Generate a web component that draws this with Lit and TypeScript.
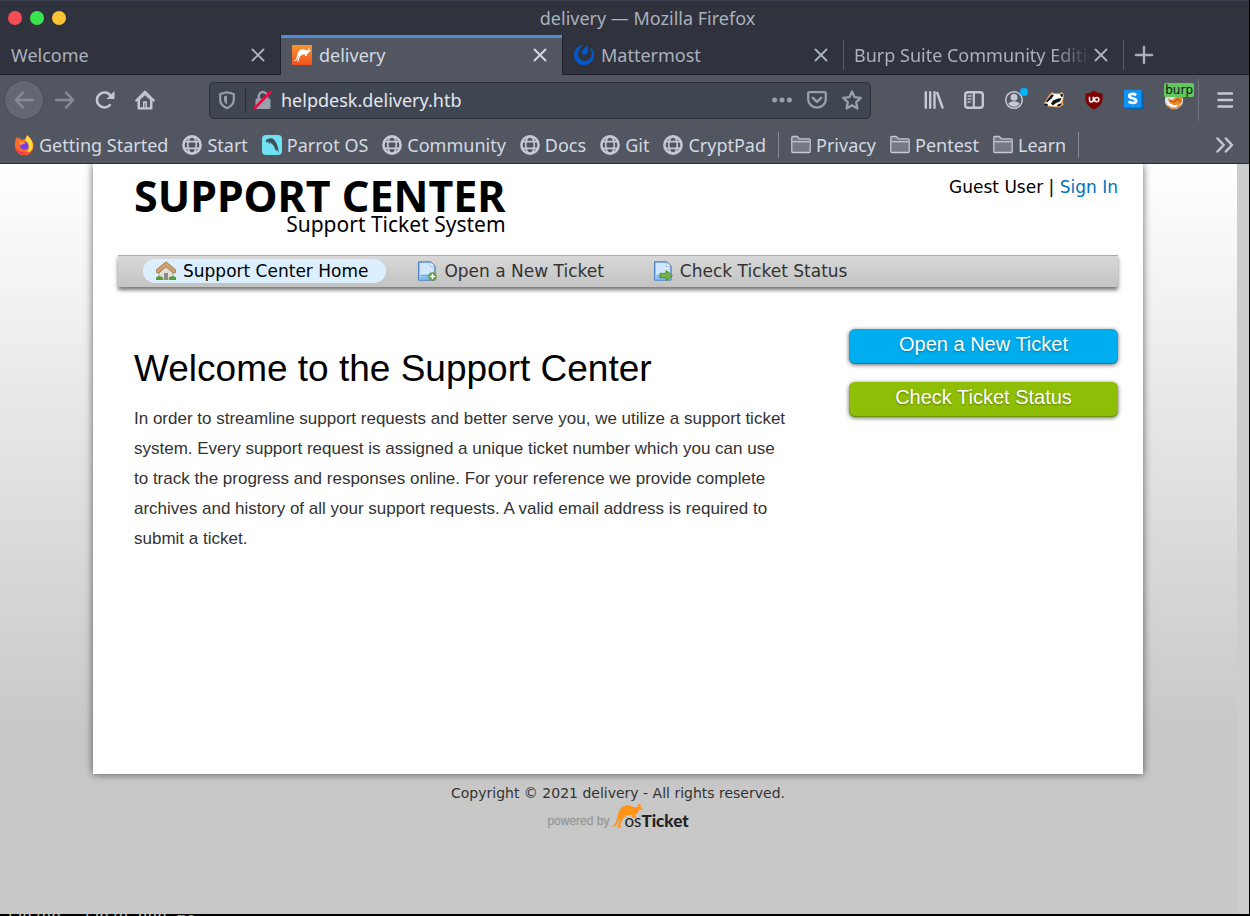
import { LitElement, html, css, svg, nothing, TemplateResult } from "lit";
import { customElement } from "lit/decorators.js";
import { classMap } from "lit/directives/class-map.js";

const icon = (body: unknown, size = 20, box = 20) =>
  html`<svg width=${size} height=${size} viewBox="0 0 ${box} ${box}" aria-hidden="true">${body}</svg>`;

const kangaroo = svg`<path d="M2 71C12 70 17 64 20 52C23 38 25 26 31 18C38 8 52 4 64 9C70 12 76 14 82 12L85 8L83 1L89 5L93 1L92 9L99 18C96 22 92 19 88 21C86 26 84 30 80 34L74 38L80 41L72 46L66 42L66 35C60 38 56 35 51 38C47 42 40 43 38 50L31 66L34 74L22 75L28 56L32 42C25 52 24 76 2 71Z"/>`;

const icons: Record<string, TemplateResult> = {
  close: icon(svg`<path d="M4.500 4.500l11 11M15.500 4.500l-11 11" fill="none" stroke="currentColor" stroke-width="1.900" stroke-linecap="round"/>`),
  plus: icon(svg`<path d="M10 2v16M2 10h16" fill="none" stroke="currentColor" stroke-width="2.400" stroke-linecap="round"/>`),
  back: icon(svg`<path d="M9 2.500L1.800 10 9 17.500M2 10h17" fill="none" stroke="currentColor" stroke-width="2.500" stroke-linecap="round" stroke-linejoin="round"/>`),
  forward: icon(svg`<path d="M11 2.500l7.200 7.500-7.200 7.500M18 10H1" fill="none" stroke="currentColor" stroke-width="2.500" stroke-linecap="round" stroke-linejoin="round"/>`),
  reload: icon(svg`<path d="M14.800 15.200A7.500 7.500 0 1 1 15.800 6" fill="none" stroke="currentColor" stroke-width="2.600" stroke-linecap="round"/><path d="M19.500 1v8h-8Z" fill="currentColor"/>`),
  home: icon(svg`<path d="M1.300 10.500L10 1.800l8.700 8.700" fill="none" stroke="currentColor" stroke-width="2.400" stroke-linecap="round" stroke-linejoin="round"/><path fill-rule="evenodd" d="M2.500 10.500L10 3.500l7.500 7V18.500Q17.500 19.500 16.500 19.500H3.500Q2.500 19.500 2.500 18.500ZM5 9.800V17.300H8V12.200Q8 11.200 9 11.200H11Q12 11.200 12 12.200V17.300H15V9.800L10 5.200Z" fill="currentColor"/><path d="M10 13v4.500" stroke="#525661" stroke-width="1"/>`),
  shield: icon(svg`<path d="M10 2.200L16.800 4V9.500C16.800 13.500 14 16.500 10 18.200 6 16.500 3.200 13.500 3.200 9.500V4Z" fill="none" stroke="currentColor" stroke-width="2.200" stroke-linejoin="round"/><path d="M10 5.500L7 6.300V9.500C7 11.800 8.200 13.400 10 14.600Z" fill="currentColor"/>`),
  lock: icon(svg`<path d="M5.800 9V6.200a4 4 0 0 1 8.200 0V9" fill="none" stroke="currentColor" stroke-width="2.500"/><rect x="2.500" y="8.500" width="15" height="10.500" rx="1.500" fill="currentColor"/><path d="M1.800 18L17.500 2" stroke="#ff0039" stroke-width="2.500" stroke-linecap="round"/>`),
  dots: icon(svg`<circle cx="2.600" cy="10" r="2.500"/><circle cx="10" cy="10" r="2.500"/><circle cx="17.400" cy="10" r="2.500"/>`),
  pocket: icon(svg`<path d="M2.700 2.200H17.300Q18.800 2.200 18.800 3.700V9.300A8.800 8.300 0 0 1 1.200 9.300V3.700Q1.200 2.200 2.700 2.200Z" fill="none" stroke="currentColor" stroke-width="2.300"/><path d="M5.800 7.800L10 11.800l4.200-4" fill="none" stroke="currentColor" stroke-width="2.500" stroke-linecap="round" stroke-linejoin="round"/>`),
  star: icon(svg`<path d="M10 1.500L12.500 7.100 18.800 7.900 14.200 12.100 15.400 18.500 10 15.300 4.600 18.500 5.800 12.100 1.200 7.900 7.500 7.100Z" fill="none" stroke="currentColor" stroke-width="2.300" stroke-linejoin="round"/>`),
  library: icon(svg`<path d="M1.800 2.300v15.400M6.200 2.300v15.400M10.500 2.300v15.400M13.300 3l5.200 14.500" fill="none" stroke="currentColor" stroke-width="2.400" stroke-linecap="round"/>`),
  sidebar: icon(svg`<rect x="1.200" y="2.200" width="17.600" height="15.600" rx="2.800" fill="none" stroke="currentColor" stroke-width="2.400"/><path d="M9.800 2.500v15" stroke="currentColor" stroke-width="2.200"/><path d="M3.600 6h4M3.600 9h4M3.600 12h3" stroke="currentColor" stroke-width="1.300"/>`),
  account: icon(svg`<circle cx="10" cy="10" r="8.300" fill="none" stroke="currentColor" stroke-width="1.500"/><circle cx="10" cy="7.300" r="3.500"/><path d="M4.200 13.500Q6.500 11.300 10 11.300T15.800 13.500Q13.500 16.800 10 16.800T4.200 13.500Z"/>`),
  badger: icon(svg`<path d="M0 13.500L5 5 8 2 10 3.500 15 3.200 18.500 2 20 5 19 12 19.500 15 15 17.500 4 16.500Z" fill="#e9a35c"/><path d="M1 13.500L7 5 9 3.500 15 4.500 18 3.500 19 7 17 13 12 16.500 4 15.800Z" fill="#fff"/><path d="M2 11.500L7.500 4.500 10 5 8 8 3 12.500ZM7 13.500L9 10.500 14 8.500 17.500 8 16 11.500 12 13 9 15.500Z" fill="#151515"/><path d="M16 4.500l2.500-.8.500 2.500-1.500 1zM14 14l4-.500-2 2.500-3 .5z" fill="#151515"/><path d="M0 14l3-.5 1.500 2-3 .5z" fill="#151515"/>`),
  ublock: icon(svg`<path d="M10 .5C12.500 2.500 15 3.500 18.500 3.500V9C18.500 13.500 15 17 10 19.500 5 17 1.500 13.500 1.500 9V3.500C5 3.500 7.500 2.500 10 .5Z" fill="#800000"/><path d="M5.500 6.800v3.200a1.900 1.900 0 0 0 3.800 0V6.800" fill="none" stroke="#fff" stroke-width="1.500"/><circle cx="12.700" cy="9.600" r="2.200" fill="none" stroke="#fff" stroke-width="1.500"/>`),
  stylus: icon(svg`<path d="M0 0H17L20 3V20H3.500L0 17Z" fill="#0b62a8"/><rect width="17.500" height="17.500" fill="#1193f5"/><path d="M12.200 5.100C9.500 3.300 5.200 3.600 5.200 6.100 5.200 9 12.200 7.500 12.200 10.800 12.200 13.300 7.500 13.600 4.500 11.700" fill="none" stroke="#fff" stroke-width="2.700"/>`),
  foxy: icon(svg`<circle cx="10" cy="10" r="9.200" fill="#dcdde3"/><path d="M3.500 8L8 10.500 13 6 18.500 6.500 18 12Q15 16.500 11 16L6 13.500Z" fill="#f08a24"/><path d="M1 8L5 13 10 15.500 14 14.500 11 17.500 5 15.500Z" fill="#fff"/><path d="M6 10.500L10 12 14 9 16.500 12" fill="none" stroke="#a54d12" stroke-width="1.100"/><path d="M3 15.500Q10 21.500 17.500 15" fill="none" stroke="#e8842a" stroke-width="1.400"/>`),
  menu: icon(svg`<path d="M3.500 3.500h13.500M3.500 10h13.500M3.500 16.500h13.500" stroke="currentColor" stroke-width="2.400" stroke-linecap="round"/>`),
  chevrons: icon(svg`<path d="M2.500 3.500L8.700 10l-6.200 6.500M10.800 3.500L17 10l-6.200 6.500" fill="none" stroke="currentColor" stroke-width="2.500" stroke-linecap="round" stroke-linejoin="round"/>`),
  globe: icon(svg`<g fill="none" stroke="currentColor"><circle cx="10" cy="10" r="8.600" stroke-width="2.600"/><ellipse cx="10" cy="10" rx="4.300" ry="8.700" stroke-width="1.700"/><path d="M2.500 6.700h15M2.500 13.300h15" stroke-width="1.700"/></g>`),
  folder: icon(svg`<path d="M.8 16.500V2.700Q.8 1.500 2 1.500H6.300L8.300 3.800H18Q19.200 3.800 19.200 5V16.500Q19.200 17.500 18.200 17.500H1.800Q.8 17.500.8 16.500Z" fill="rgb(200 204 215 / .3)" stroke="currentColor" stroke-width="1.300"/><path d="M1.500 6.700H18.500" stroke="currentColor" stroke-width="1.300"/>`),
  firefox: icon(svg`<path d="M13 .2C16 2 19.500 6 19.500 11A9.300 9.300 0 0 1 .8 11C.8 7 1.500 4 3 1.500L4 4 6 2.500 7 5C9 4 10 4 11 4Z" fill="#ff6a2b"/><path d="M13 .2C16.500 3 20 8 18.500 13 17 17 14 17.500 13 17 17 13 14 8 11 6Z" fill="#ffe03a"/><path d="M1 12A9.300 9.300 0 0 0 16 17C11 19 4 17 1 12Z" fill="#f4246e"/><circle cx="10.200" cy="10.500" r="4.300" fill="#7b3de6"/><path d="M5 6C8 5.500 11 6.500 11.500 8.500 9 8.500 7.500 9.500 7 11Z" fill="#ff9b28"/>`),
  parrot: icon(svg`<rect width="20" height="20" rx="4" fill="#70e1f0"/><path d="M3.500 6C5.500 3 10 2.600 12 4.500 14.500 7.500 16.500 12 16.800 17.500L14.800 14.500 14.200 16.500 11.500 10.500C10 9 9 8 8 7.500L7 9.500 6.500 6.500 4.500 7.500Z" fill="#40505c"/>`),
  osticket: icon(svg`<defs><linearGradient id="g" x2="0" y2="1"><stop stop-color="#f7962c"/><stop offset="1" stop-color="#f0511f"/></linearGradient></defs><rect width="20" height="20" rx="1" fill="url(#g)"/><g transform="translate(1 3) scale(.18)" fill="#fff">${kangaroo}</g>`),
  mattermost: icon(svg`<path d="M9.500 0A10 10 0 1 0 16.500 2.400L16.600 5A7 7 0 1 1 4.500 5.800C5.800 3.500 7.600 1.700 9.500 0Z" fill="#0058cc"/><path d="M13.300.8C13.800 3.500 14 6 13.400 8A2.900 2.900 0 0 1 7.800 7C8.300 5 10.500 3.500 13.300.8Z" fill="#0058cc"/>`),
  house: icon(svg`<path d="M3 9.500L10 3.500l7 6V18H3Z" fill="#e3dfd8" stroke="#a39a8c" stroke-width=".8"/><path d="M0 16.500Q3 13.500 7 16.500V19H0ZM13 16.500Q17 13.500 20 16.500V19H13Z" fill="#5a9c3c"/><path d="M8 12H12V19H8Z" fill="#8e8a84"/><path d="M2 10L10 3.400l8 6.600" fill="none" stroke="#8f6539" stroke-width="4.400" stroke-linecap="round"/><path d="M2 10L10 3.400l8 6.600" fill="none" stroke="#d2a26c" stroke-width="3.200" stroke-linecap="round"/>`),
  docAdd: icon(svg`<path d="M1.600 1.600Q1.600 .8 2.400.8H13.500L18 5.300V18.400Q18 19.200 17.200 19.200H2.400Q1.600 19.200 1.600 18.400Z" fill="#b5d6f8" stroke="#4f83c4" stroke-width="1.300"/><path d="M3 2.200H12.500L16.500 6.500V12L3 15Z" fill="#d3e7fc"/><path d="M13.300 1v4.500h4.500" fill="#fff" stroke="#7ba7da" stroke-width=".6"/><path d="M3.500 14.500H12M3.500 16.800H12" stroke="#4fb0f5" stroke-width="1.300"/><circle cx="15.500" cy="15.500" r="4.300" fill="#5d9c32"/><path d="M15.500 12.800v5.400M12.800 15.500h5.400" stroke="#fff" stroke-width="1.600"/>`),
  docGo: icon(svg`<path d="M1.600 1.600Q1.600 .8 2.400.8H13.500L18 5.300V18.400Q18 19.200 17.200 19.200H2.400Q1.600 19.200 1.600 18.400Z" fill="#b5d6f8" stroke="#4f83c4" stroke-width="1.300"/><path d="M3 2.200H12.500L16.500 6.500V12L3 15Z" fill="#d3e7fc"/><path d="M13.300 1v4.500h4.500" fill="#fff" stroke="#7ba7da" stroke-width=".6"/><path d="M3.500 14.500H7M3.500 16.800H12" stroke="#4fb0f5" stroke-width="1.300"/><path d="M7 12.300h6V9.300L19.500 14.500 13 19.700V16.700H7Z" fill="#76b04b" stroke="#4a8a2d" stroke-width=".9"/>`),
};

@customElement("browser-chrome")
class BrowserChrome extends LitElement {
  static styles = css`
    :host { display: block; font: 18px/24px "Noto Sans", sans-serif; color: #d3dae3; background: #525661; border-bottom: 1px solid #2a2d36; }
    svg { display: block; flex: none; fill: currentColor; }
    button { border: 0; padding: 0; background: none; color: inherit; font: inherit; display: grid; place-items: center; position: relative; }
    .title { display: grid; grid-template-columns: 44px 1fr; align-items: center; height: 35px; padding: 0 0 0 2px; background: #30333d; border-top: 1px solid #3b3f4f; box-sizing: border-box; color: #a9b1be; }
    .title h1 { margin: 0; font: inherit; text-align: center; white-space: nowrap; }
    .lights { display: flex; gap: 8px; padding-left: 6px; }
    .light { width: 14px; height: 14px; border-radius: 50%; flex: none; }
    .red { background: #f44d56; } .green { background: #38e54d; } .yellow { background: #fcc332; }
    .tabs { display: flex; height: 40px; background: #30333d; box-shadow: inset 0 -1px #20232b; color: #a9b1be; }
    .tab { display: flex; align-items: center; flex: 0 1 280px; min-width: 0; box-sizing: border-box; padding: 0 12px 0 11px; gap: 7px; }
    .tab.on { background: #525661; color: #d3dae3; border: 1px solid #20232b; border-width: 0 1px; box-shadow: inset 0 3px #4a8ddb; flex-basis: 283px; }
    .tab.line { background: linear-gradient(#565a66, #565a66) left 5px / 1px 30px no-repeat; }
    .name { flex: 1; overflow: hidden; white-space: nowrap; }
    .fade { margin-right: -7px; -webkit-mask: linear-gradient(90deg, #000 84%, transparent); mask: linear-gradient(90deg, #000 84%, transparent); }
    .new { width: 42px; background: linear-gradient(#565a66, #565a66) left 5px / 1px 30px no-repeat; }
    .bar { display: flex; align-items: center; height: 51px; box-sizing: border-box; padding: 0 4px 1px; color: #c3c8d4; }
    .bar button { width: 40px; height: 40px; flex: none; }
    .bar .back { border-radius: 50%; margin-right: 1px; background: #646772; box-shadow: inset 0 0 0 1px #484b56; }
    .dim { color: #868a95; }
    .url { display: flex; align-items: center; flex: 1; height: 37px; margin: 0 43px 0 44px; box-sizing: border-box; border: 1px solid #2a2d36; border-radius: 5px; background: #404552; padding: 0 1px 0 7px; color: #9a9fac; }
    .bar .url button { width: 35px; height: 35px; }
    .url .shield { width: 20px; margin-right: 8px; }
    .url .shield, .url .lock { flex: none; }
    .url .lock { border-left: 1px solid #2a2d36; padding: 3px 8px 3px 7px; }
    .url input { flex: 1; min-width: 0; border: 0; padding: 0; outline: 0; background: none; color: #e3e7ee; font: inherit; }
    .dot { position: absolute; top: 8px; right: 6px; width: 8px; height: 8px; border-radius: 50%; background: #00b3ff; }
    .badge { position: absolute; top: 3px; right: 0; padding: 0 1px; border-radius: 2px; background: #60c75d; color: #111; font: 12px/14px "DejaVu Sans", sans-serif; }
    .rule { width: 1px; height: 42px; margin: 0 6px 0 4px; background: #70747f; flex: none; }
    .marks { display: flex; align-items: center; height: 37px; padding: 0 14px; gap: 14px; white-space: nowrap; overflow: hidden; }
    .marks a { display: flex; align-items: center; gap: 5px; color: inherit; text-decoration: none; }
    .marks svg { color: #c3c8d4; }
    .marks .sep { width: 1px; height: 26px; background: #858995; margin: 0 -2px; flex: none; }
    .marks .more { margin-left: auto; }
  `;
  tabs = [
    { name: "Welcome" },
    { name: "delivery", icon: "osticket", on: true },
    { name: "Mattermost", icon: "mattermost" },
    { name: "Burp Suite Community Edition", line: true, fade: true },
  ];
  tools = [["library", "Library"], ["sidebar", "Sidebars"], ["account", "Account"], ["badger", "Privacy Badger"], ["ublock", "uBlock Origin"], ["stylus", "Stylus"], ["foxy", "FoxyProxy"]];
  links = [["firefox", "Getting Started"], ["globe", "Start"], ["parrot", "Parrot OS"], ["globe", "Community"], ["globe", "Docs"], ["globe", "Git"], ["globe", "CryptPad"]];
  folders = ["Privacy", "Pentest", "Learn"];

  render() {
    return html`
      <div class="title">
        <div class="lights"><span class="light red"></span><span class="light green"></span><span class="light yellow"></span></div>
        <h1>delivery — Mozilla Firefox</h1>
      </div>
      <div class="tabs">
        ${this.tabs.map((t) => html`
          <div class=${classMap({ tab: true, on: !!t.on, line: !!t.line })}>
            ${t.icon ? icons[t.icon] : nothing}
            <span class=${classMap({ name: true, fade: !!t.fade })}>${t.name}</span>
            <button aria-label="Close tab">${icons.close}</button>
          </div>`)}
        <button class="new" aria-label="New tab">${icons.plus}</button>
      </div>
      <div class="bar">
        <button class="back dim" aria-label="Back">${icons.back}</button>
        <button class="dim" aria-label="Forward">${icons.forward}</button>
        <button aria-label="Reload">${icons.reload}</button>
        <button aria-label="Home">${icons.home}</button>
        <div class="url">
          <span class="shield">${icons.shield}</span><span class="lock">${icons.lock}</span>
          <input type="text" aria-label="Address" value="helpdesk.delivery.htb" />
          <button aria-label="Page actions">${icons.dots}</button>
          <button aria-label="Save to Pocket">${icons.pocket}</button>
          <button aria-label="Bookmark this page">${icons.star}</button>
        </div>
        ${this.tools.map(([k, label]) => html`<button aria-label=${label}>${icons[k]}
          ${k === "account" ? html`<span class="dot"></span>` : nothing}
          ${k === "foxy" ? html`<span class="badge">burp</span>` : nothing}</button>`)}
        <span class="rule"></span>
        <button aria-label="Menu">${icons.menu}</button>
      </div>
      <nav class="marks">
        ${this.links.map(([k, label]) => html`<a href="#">${icons[k]}<span>${label}</span></a>`)}
        <span class="sep"></span>
        ${this.folders.map((f) => html`<a href="#">${icons.folder}<span>${f}</span></a>`)}
        <span class="sep"></span>
        <button class="more" aria-label="More bookmarks">${icons.chevrons}</button>
      </nav>`;
  }
}

@customElement("support-page")
class SupportPage extends LitElement {
  static styles = css`
    :host { display: block; padding-right: 13px; font: 17px/24px "DejaVu Sans", sans-serif; color: #000;
      background: linear-gradient(#cdcdcd, #cdcdcd) right / 12px 100% no-repeat, linear-gradient(#fff, #c8c8c8) top / 100% 568px no-repeat #c8c8c8; }
    a { text-decoration: none; color: inherit; }
    svg { display: block; flex: none; }
    .card { max-width: 1000px; min-height: 610px; margin: 0 auto; padding: 0 25px; background: #fff; box-shadow: 0 0 8px rgb(0 0 0 / .6); clip-path: inset(0 -12px -12px -12px); }
    header { display: flex; justify-content: space-between; height: 91px; padding: 11px 0 0 16px; box-sizing: border-box; }
    .logo { display: flex; flex-direction: column; align-items: flex-end; font-family: "Noto Sans", sans-serif; }
    .logo strong { font-size: 43px; line-height: 41px; }
    .logo span { font-size: 21px; line-height: 17px; }
    .user a { color: #0072bc; }
    .menu { display: flex; gap: 18px; height: 32px; padding: 3px 25px 4px; box-sizing: border-box; border-top: 1px solid #aaada9; background: linear-gradient(#d8d8d8, #c3c3c3); box-shadow: 0 3px 4px rgb(0 0 0 / .55); color: #333; }
    .menu a { display: flex; align-items: center; gap: 7px; padding: 0 18px 0 13px; border-radius: 20px; }
    .menu .on { background: #dbefff; color: #000; }
    .cols { display: flex; gap: 40px; padding: 42px 0; }
    .text { flex: 1; padding-left: 16px; }
    h2 { margin: 18px 0 13px; font: 37px/44px "Liberation Sans", sans-serif; }
    p { margin: 0; max-width: 656px; font: 17px/30px "Liberation Sans", sans-serif; color: #333; }
    .side { display: flex; flex-direction: column; gap: 18px; width: 269px; }
    .btn { height: 35px; border-radius: 6px; text-align: center; color: #fff; font: 20px/30px "Liberation Sans", sans-serif; text-shadow: 0 1px 2px rgb(0 0 0 / .35); box-shadow: 0 1px 4px rgb(0 0 0 / .6), inset 0 -1px 1px rgb(0 0 0 / .25); }
    .blue { background: #00aeef; } .green { background: #8fbe07; }
    footer { display: grid; justify-items: center; padding: 9px 0; font-size: 14px; line-height: 20px; color: #333; }
    .powered { display: flex; align-items: flex-end; height: 25px; color: #999; font: 12px/14px "Liberation Sans", sans-serif; -webkit-text-stroke: .3px #999; }
    .roo { fill: #ff9419; margin: 0 -19px 0 1px; }
    .brand { font: 17px/14px Lato, sans-serif; color: #222; -webkit-text-stroke: 0; }
    .brand b { font-weight: 900; }
  `;
  render() {
    return html`
      <div class="card">
        <header>
          <a class="logo" href="#"><strong>SUPPORT CENTER</strong><span>Support Ticket System</span></a>
          <div class="user">Guest User | <a href="#">Sign In</a></div>
        </header>
        <nav class="menu">
          <a class="on" href="#">${icons.house}Support Center Home</a>
          <a href="#">${icons.docAdd}Open a New Ticket</a>
          <a href="#">${icons.docGo}Check Ticket Status</a>
        </nav>
        <div class="cols">
          <div class="text">
            <h2>Welcome to the Support Center</h2>
            <p>In order to streamline support requests and better serve you, we utilize a support ticket system. Every support request is assigned a unique ticket number which you can use to track the progress and responses online. For your reference we provide complete archives and history of all your support requests. A valid email address is required to submit a ticket.</p>
          </div>
          <div class="side">
            <a class="btn blue" href="#">Open a New Ticket</a>
            <a class="btn green" href="#">Check Ticket Status</a>
          </div>
        </div>
      </div>
      <footer>
        <span>Copyright © 2021 delivery - All rights reserved.</span>
        <a class="powered" href="#">powered by
          <svg class="roo" width="33" height="25" viewBox="0 0 100 76" aria-hidden="true">${kangaroo}</svg>
          <span class="brand">os<b>Ticket</b></span></a>
      </footer>`;
  }
}

@customElement("app-root")
class AppRoot extends LitElement {
  static styles = css`
    :host { display: grid; grid-template-rows: auto 1fr 2px; min-height: 100vh; box-sizing: border-box; padding-right: 1px; background: #000; }
    .term { overflow: hidden; padding-left: 3px; color: #b8b8a8; font: 16px/10px "DejaVu Sans Mono", monospace; }
  `;
  render() {
    return html`<browser-chrome></browser-chrome><support-page></support-page><div class="term">320/00, 320/0 000 ms</div>`;
  }
}
